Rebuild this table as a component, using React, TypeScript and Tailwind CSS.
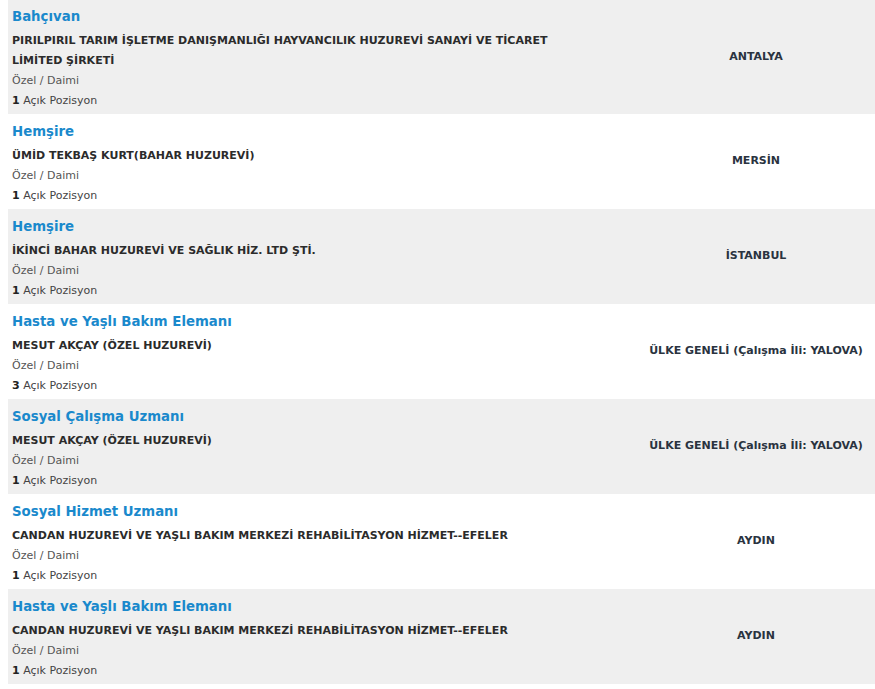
const jobs = [
  {
    title: "Bahçıvan",
    company: "PIRILPIRIL TARIM İŞLETME DANIŞMANLIĞI HAYVANCILIK HUZUREVİ SANAYİ VE TİCARET LİMİTED ŞİRKETİ",
    count: 1,
    city: "ANTALYA",
  },
  { title: "Hemşire", company: "ÜMİD TEKBAŞ KURT(BAHAR HUZUREVİ)", count: 1, city: "MERSİN" },
  { title: "Hemşire", company: "İKİNCİ BAHAR HUZUREVİ VE SAĞLIK HİZ. LTD ŞTİ.", count: 1, city: "İSTANBUL" },
  {
    title: "Hasta ve Yaşlı Bakım Elemanı",
    company: "MESUT AKÇAY (ÖZEL HUZUREVİ)",
    count: 3,
    city: "ÜLKE GENELİ (Çalışma İli: YALOVA)",
  },
  {
    title: "Sosyal Çalışma Uzmanı",
    company: "MESUT AKÇAY (ÖZEL HUZUREVİ)",
    count: 1,
    city: "ÜLKE GENELİ (Çalışma İli: YALOVA)",
  },
  {
    title: "Sosyal Hizmet Uzmanı",
    company: "CANDAN HUZUREVİ VE YAŞLI BAKIM MERKEZİ REHABİLİTASYON HİZMET--EFELER",
    count: 1,
    city: "AYDIN",
  },
  {
    title: "Hasta ve Yaşlı Bakım Elemanı",
    company: "CANDAN HUZUREVİ VE YAŞLI BAKIM MERKEZİ REHABİLİTASYON HİZMET--EFELER",
    count: 1,
    city: "AYDIN",
  },
];

export default function App() {
  return (
    <div
      className="w-[875px] h-[689px] bg-white overflow-hidden pl-2"
      style={{ fontFamily: '"DejaVu Sans", Verdana, sans-serif' }}
    >
      {jobs.map((job, i) => (
        <div
          key={i}
          className={`flex items-center ${i % 2 === 0 ? "bg-[#efefef]" : "bg-white"}`}
        >
          <div className={`w-[629px] pl-1 pr-[40px] pb-[3px] ${i === 0 ? "pt-[7px]" : "pt-[8px]"}`}>
            <div className="text-[13.3px] leading-[20px] font-bold text-[#1a89cc] mb-[4px]">{job.title}</div>
            <div className="text-[11px] leading-[20px] font-bold text-[#2b2b2b]">{job.company}</div>
            <div className="text-[11px] leading-[20px] text-[#555]">Özel / Daimi</div>
            <div className="text-[11px] leading-[20px] text-[#444]">
              <span className="font-bold text-[#222]">{job.count}</span> Açık Pozisyon
            </div>
          </div>
          <div className="flex-1 text-center text-[11px] font-bold text-[#2a3340]">{job.city}</div>
        </div>
      ))}
    </div>
  );
}
